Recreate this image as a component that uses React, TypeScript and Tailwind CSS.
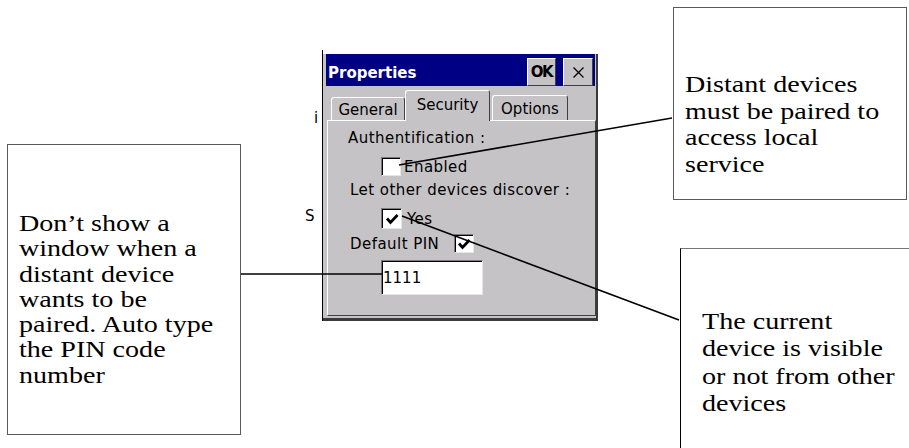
import React from "react";

function CheckBox({ checked, className }: { checked?: boolean; className: string }) {
  return (
    <div
      className={`flex items-center justify-center border border-t-[#7b7b7b] border-l-[#7b7b7b] border-r-[#e6e6e6] border-b-[#e6e6e6] bg-white shadow-[inset_1px_1px_0_#000] ${className}`}
    >
      {checked && (
        <svg width="14" height="12" viewBox="0 0 14 12">
          <polyline points="2,5.5 5.5,9.5 12.5,2" fill="none" stroke="#000" strokeWidth="2.8" />
        </svg>
      )}
    </div>
  );
}

function Dialog() {
  return (
    <div className="absolute left-[322px] top-[50px] flex h-[271px] w-[276px] flex-col border-l border-black pt-[4px] font-['DejaVu_Sans',sans-serif] text-[15px] text-black">
      <div className="flex flex-1 flex-col border-r-2 border-b-[3px] border-r-[#3a3a3a] border-b-[#3a3a3a] bg-[#c6c3c6] pl-[3px] pb-[2px]">
        {/* title bar */}
        <div className="mr-px flex h-[32px] items-center justify-between bg-[#000084] pl-[2px] pr-[2px]">
          <span className="mt-[6px] text-[15px] font-bold leading-[18px] text-white">Properties</span>
          <div className="mt-[4px] flex h-[28px] gap-[7px]">
            <div className="flex w-[29px] items-center justify-center border border-t-white border-l-white border-r-[#404040] border-b-[#404040] bg-[#c6c3c6] pt-[1px] text-[15px] font-bold tracking-[-1.5px]">
              OK
            </div>
            <div className="flex w-[30px] items-center justify-center border border-t-white border-l-white border-r-[#404040] border-b-[#404040] bg-[#c6c3c6]">
              <svg width="11" height="11" viewBox="0 0 11 11">
                <path d="M0.5 0.5 L10.5 10.5 M10.5 0.5 L0.5 10.5" stroke="#000" strokeWidth="1.3" />
              </svg>
            </div>
          </div>
        </div>

        {/* tabs */}
        <div className="flex h-[34px] items-end">
          <div className="ml-[5px] flex h-[23px] w-[74px] items-center justify-center rounded-t-[3px] border-t border-l border-r border-t-white border-l-white border-r-[#404040] pt-[2px] leading-[16px]">
            General
          </div>
          <div className="relative z-10 -mb-px flex h-[31px] w-[85px] items-start justify-center rounded-t-[3px] border-t border-l border-r border-t-white border-l-white border-r-[#404040] bg-[#c6c3c6] pt-[6px] leading-[16px]">
            Security
          </div>
          <div className="ml-[2px] flex h-[25px] w-[76px] items-center justify-center rounded-t-[3px] border-t border-l border-r border-t-white border-l-white border-r-[#404040] pt-[2px] leading-[16px]">
            Options
          </div>
        </div>

        {/* panel */}
        <div className="ml-px flex flex-1 flex-col border border-t-white border-l-white border-r-[#404040] border-b-[#404040] leading-[16px] tracking-[0.45px]">
          <div className="mt-[9px] pl-[20px]">Authentification :</div>
          <div className="mt-[11px] ml-[53px] flex h-[19px] items-center gap-[3px]">
            <CheckBox className="h-[19px] w-[20px]" />
            <span>Enabled</span>
          </div>
          <div className="mt-[6px] pl-[22px]">Let other devices discover :</div>
          <div className="mt-[10px] ml-[53px] flex h-[21px] items-center gap-[5px]">
            <CheckBox checked className="h-[21px] w-[21px]" />
            <span>Yes</span>
          </div>
          <div className="mt-[5px] flex h-[19px] items-center pl-[22px]">
            <span className="w-[104px]">Default PIN</span>
            <CheckBox checked className="h-[19px] w-[20px]" />
          </div>
          <div className="mt-[7px] ml-[53px] flex h-[35px] w-[102px] items-center border border-t-[#7b7b7b] border-l-[#7b7b7b] border-r-[#e6e6e6] border-b-[#e6e6e6] bg-white pl-[1px] tracking-normal shadow-[inset_1px_1px_0_#000]">
            1111
          </div>
        </div>
      </div>
    </div>
  );
}

function Note({ lines, className, lead }: { lines: string[]; className: string; lead: string }) {
  return (
    <div className={`absolute border border-[#5a5a5a] bg-white ${className}`}>
      <div className={`origin-left scale-x-[1.17] font-['Liberation_Serif','Times_New_Roman',serif] text-[24px] text-black ${lead}`}>
        {lines.map((l) => (
          <div key={l} className="whitespace-nowrap">
            {l}
          </div>
        ))}
      </div>
    </div>
  );
}

export default function App() {
  return (
    <div className="relative h-[448px] w-[909px] overflow-hidden bg-white">
      <span className="absolute left-[314px] top-[110px] font-['DejaVu_Sans',sans-serif] text-[15px] leading-[16px] text-black">
        i
      </span>
      <span className="absolute left-[305px] top-[208px] font-['DejaVu_Sans',sans-serif] text-[15px] leading-[16px] text-black">
        S
      </span>

      <Dialog />

      <Note
        className="left-[7px] top-[144px] h-[291px] w-[234px] pt-[66px] pl-[11px]"
        lead="leading-[25.3px]"
        lines={[
          "Don\u2019t show a",
          "window when a",
          "distant device",
          "wants to be",
          "paired. Auto type",
          "the PIN code",
          "number",
        ]}
      />
      <Note
        className="left-[673px] top-[7px] h-[193px] w-[234px] pt-[63px] pl-[11px]"
        lead="leading-[26.6px]"
        lines={["Distant devices", "must be paired to", "access local", "service"]}
      />
      <Note
        className="left-[680px] top-[248px] h-[240px] w-[260px] border-t-[#777] border-l-black pt-[59px] pl-[21px]"
        lead="leading-[27.3px]"
        lines={["The current", "device is visible", "or not from other", "devices"]}
      />

      <svg className="pointer-events-none absolute inset-0" width="909" height="448">
        <line x1="399" y1="165" x2="672" y2="118" stroke="#000" strokeWidth="1.6" />
        <line x1="402" y1="216" x2="679" y2="320" stroke="#000" strokeWidth="1.6" />
        <line x1="241" y1="274" x2="382" y2="274" stroke="#000" strokeWidth="1.6" />
      </svg>
    </div>
  );
}
